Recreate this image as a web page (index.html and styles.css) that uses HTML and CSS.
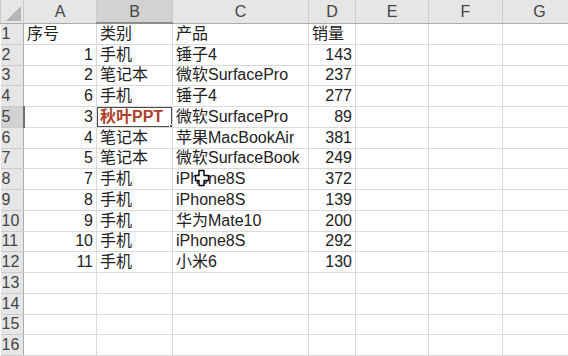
FILE: index.html
```html
<!DOCTYPE html>
<html lang="zh-CN">
  <head>
    <meta charset="UTF-8" />
    <meta name="viewport" content="width=device-width, initial-scale=1.0" />
    <title>销量表</title>
    <link rel="stylesheet" href="styles.css">
  </head>
  <body>
    <div class="sheet">
      <table class="grid">
        <colgroup>
          <col class="w-head" />
          <col class="w-a" />
          <col class="w-b" />
          <col class="w-c" />
          <col class="w-d" />
          <col class="w-e" />
          <col class="w-f" />
          <col class="w-g" />
        </colgroup>
        <thead>
          <tr>
            <th class="corner"><span class="corner-mark"></span></th>
            <th>A</th>
            <th class="sel">B</th>
            <th>C</th>
            <th>D</th>
            <th>E</th>
            <th>F</th>
            <th>G</th>
          </tr>
        </thead>
        <tbody>
          <tr><th>1</th><td>序号</td><td>类别</td><td>产品</td><td>销量</td><td></td><td></td><td></td></tr>
          <tr><th>2</th><td class="num">1</td><td>手机</td><td>锤子4</td><td class="num">143</td><td></td><td></td><td></td></tr>
          <tr><th>3</th><td class="num">2</td><td>笔记本</td><td>微软SurfacePro</td><td class="num">237</td><td></td><td></td><td></td></tr>
          <tr><th>4</th><td class="num">6</td><td>手机</td><td>锤子4</td><td class="num">277</td><td></td><td></td><td></td></tr>
          <tr><th class="sel">5</th><td class="num">3</td><td class="active"><b>秋叶PPT</b></td><td>微软SurfacePro</td><td class="num">89</td><td></td><td></td><td></td></tr>
          <tr><th>6</th><td class="num">4</td><td>笔记本</td><td>苹果MacBookAir</td><td class="num">381</td><td></td><td></td><td></td></tr>
          <tr><th>7</th><td class="num">5</td><td>笔记本</td><td>微软SurfaceBook</td><td class="num">249</td><td></td><td></td><td></td></tr>
          <tr><th>8</th><td class="num">7</td><td>手机</td><td>iPhone8S</td><td class="num">372</td><td></td><td></td><td></td></tr>
          <tr><th>9</th><td class="num">8</td><td>手机</td><td>iPhone8S</td><td class="num">139</td><td></td><td></td><td></td></tr>
          <tr><th>10</th><td class="num">9</td><td>手机</td><td>华为Mate10</td><td class="num">200</td><td></td><td></td><td></td></tr>
          <tr><th>11</th><td class="num">10</td><td>手机</td><td>iPhone8S</td><td class="num">292</td><td></td><td></td><td></td></tr>
          <tr><th>12</th><td class="num">11</td><td>手机</td><td>小米6</td><td class="num">130</td><td></td><td></td><td></td></tr>
          <tr><th>13</th><td></td><td></td><td></td><td></td><td></td><td></td><td></td></tr>
          <tr><th>14</th><td></td><td></td><td></td><td></td><td></td><td></td><td></td></tr>
          <tr class="pink"><th>15</th><td></td><td></td><td></td><td></td><td></td><td></td><td></td></tr>
          <tr><th>16</th><td></td><td></td><td></td><td></td><td></td><td></td><td></td></tr>
        </tbody>
      </table>

      <!-- 鼠标指针（白色十字） -->
      <svg class="cursor" width="16" height="18" viewBox="0 0 16 18">
        <path d="M5 1.5h5v5h4.5v5h-4.5v5h-5v-5h-3.5v-5h3.5z" fill="#fff" stroke="#000" stroke-width="1.4" stroke-linejoin="round" />
      </svg>
    </div>
  </body>
</html>
```

FILE: styles.css
```css
body {
  margin: 0;
  background: #fff;
  overflow: hidden;
}
.sheet {
  position: relative;
  width: 568px;
  height: 356px;
  overflow: hidden;
  font-family: "Liberation Sans", "Noto Sans CJK SC", sans-serif;
  font-size: 16px;
  color: #222;
}
.grid {
  border-collapse: collapse;
  table-layout: fixed;
  width: 576px;
}
.w-head { width: 23px; }
.w-a { width: 73px; }
.w-b { width: 76px; }
.w-c { width: 136px; }
.w-d { width: 47px; }
.w-e { width: 73px; }
.w-f { width: 74px; }
.w-g { width: 74px; }

.grid td,
.grid th {
  padding: 0 3px;
  white-space: nowrap;
  overflow: hidden;
  line-height: 18px;
}
.grid td {
  height: 19.75px;
  border: 1px solid #dadada;
  text-align: left;
}
.grid td.num {
  text-align: right;
  padding-right: 3px;
}

/* 列标题 */
.grid thead th {
  height: 21px;
  background: #e6e6e6;
  color: #444;
  font-weight: normal;
  text-align: center;
  border-left: 1px solid #cbcbcb;
  border-right: 1px solid #cbcbcb;
  border-bottom: 1px solid #ababab;
  padding-top: 1px;
}
.grid thead th.sel {
  background: #d2d2d2;
  border-bottom: 2px solid #8c8c8c;
}

/* 行标题 */
.grid tbody th {
  background: #e6e6e6;
  color: #444;
  font-weight: normal;
  text-align: left;
  padding: 0 0 0 1px;
  border-bottom: 1px solid #cbcbcb;
  border-right: 1px solid #ababab;
}
.grid tbody th.sel {
  background: #d2d2d2;
  border-right: 2px solid #6f6f6f;
}

.corner {
  position: relative;
}
.corner-mark {
  position: absolute;
  right: 2px;
  bottom: 2px;
  width: 0;
  height: 0;
  border-left: 15px solid transparent;
  border-bottom: 15px solid #b5b5b5;
}

/* 当前选中单元格 */
.grid td.active {
  position: relative;
  color: #b0402a;
}
.grid td.active b {
  font-weight: bold;
}
.grid td.active::after {
  content: "";
  position: absolute;
  left: -1px;
  top: -1px;
  right: -1px;
  bottom: -1px;
  border: 2px solid #4b4b4b;
}
.grid td.active::before {
  content: "";
  position: absolute;
  right: -4px;
  bottom: -4px;
  width: 5px;
  height: 5px;
  background: #4b4b4b;
  border: 1px solid #fff;
  z-index: 1;
}

.grid tr.pink td {
  border-bottom-color: #ecd8d8;
}

.cursor {
  position: absolute;
  left: 194px;
  top: 169px;
}
```
